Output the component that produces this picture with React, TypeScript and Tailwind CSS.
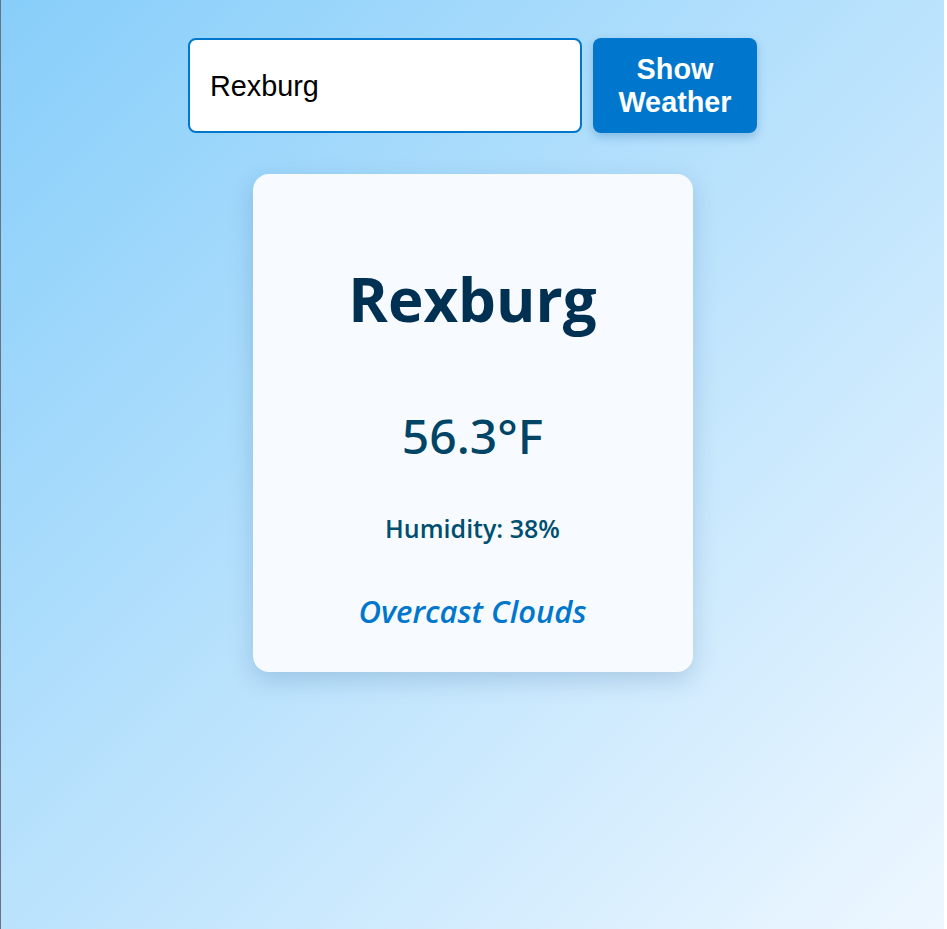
import { useState } from "react";

export default function App() {
  const [city, setCity] = useState("Rexburg");

  return (
    <div className="flex min-h-screen bg-white">
      <div className="min-h-screen w-[944px] border-l border-gray-500 bg-[linear-gradient(135deg,#87cefa_0%,#eef7ff_100%)] pt-[38px] font-['Liberation_Sans',Arial,sans-serif]">
        {/* Search */}
        <div className="flex justify-center gap-[11px]">
          <input
            value={city}
            onChange={(e) => setCity(e.target.value)}
            className="h-[95px] w-[394px] rounded-lg border-2 border-[#0077cc] bg-white pt-[2px] pl-5 text-[28.8px] text-black outline-none"
          />
          <button className="h-[95px] w-[164px] rounded-lg bg-[#0077cc] text-[28.8px] font-bold leading-[33px] text-white shadow-[0_4px_10px_rgba(0,80,160,0.25)]">
            Show
            <br />
            Weather
          </button>
        </div>

        {/* Weather card */}
        <div className="mx-auto mt-[41px] flex w-[440px] flex-col items-center rounded-2xl bg-[#f7fbff] pt-[88px] pb-[42px] font-['Open_Sans',sans-serif] shadow-[0_8px_24px_rgba(0,60,120,0.18)]">
          <h2 className="text-[60px] leading-[74px] font-bold text-[#003153]">
            Rexburg
          </h2>
          <p className="mt-[70px] font-['Noto_Sans',sans-serif] text-[48px] leading-[60px] font-medium text-[#004466]">
            56.3°F
          </p>
          <p className="mt-[47px] text-[25px] leading-[30px] font-semibold text-[#004f70]">
            Humidity: 38%
          </p>
          <p className="mt-[50px] text-[31px] leading-[37px] font-semibold italic text-[#0077cc]">
            Overcast Clouds
          </p>
        </div>
      </div>
    </div>
  );
}
